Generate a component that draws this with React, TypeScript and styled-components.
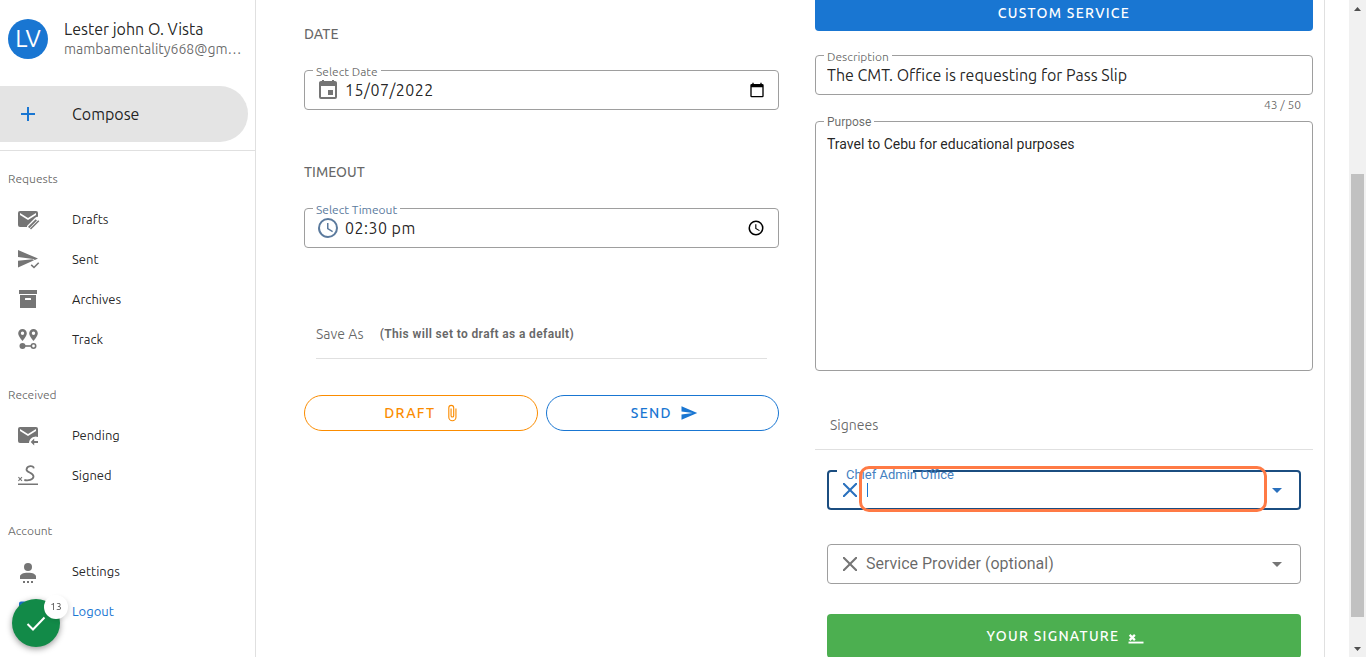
import React from "react";
import styled, { createGlobalStyle, css } from "styled-components";

const ubuntu = `Ubuntu, "Noto Sans", sans-serif`;
const roboto = `Roboto, sans-serif`;
const blue = "#1976d2";
const text = "rgba(0, 0, 0, 0.87)";
const muted = "rgba(0, 0, 0, 0.6)";
const iconGrey = "#757575";
const line = "rgba(0, 0, 0, 0.12)";

const GlobalStyle = createGlobalStyle`
  *, *::before, *::after { box-sizing: border-box; }
  body { margin: 0; background: #fff; color: ${text}; font: 14px/20px ${ubuntu}; }
  button, input, textarea { font: inherit; color: inherit; margin: 0; }
`;

/* ---------- icons ---------- */

const Svg = styled.svg<{ $size?: number }>`
  display: block;
  flex: none;
  width: ${(p) => p.$size ?? 24}px;
  height: ${(p) => p.$size ?? 24}px;
  fill: currentColor;
`;

const Icon = ({ size, children }: { size?: number; children: React.ReactNode }) => (
  <Svg $size={size} viewBox="0 0 24 24" aria-hidden="true">
    {children}
  </Svg>
);

const PlusIcon = () => (
  <Icon><path d="M19 13H13V19H11V13H5V11H11V5H13V11H19V13Z" /></Icon>
);
const DraftsIcon = () => (
  <Icon>
    <path d="M4 4H20A2 2 0 0 1 22 6V9.8C21 9.7 20 10 19.2 10.8L11 19V20H4A2 2 0 0 1 2 18V6A2 2 0 0 1 4 4ZM4 6V8L12 13L20 8V6L12 11Z" />
    <path d="M12.700 20.500L20.300 12.900" fill="none" stroke="currentColor" strokeWidth="1.800" />
    <path d="M14.500 22L22.800 13.700" fill="none" stroke="currentColor" strokeWidth="1.500" />
  </Icon>
);
const SentIcon = () => (
  <Icon>
    <path d="M2 3L22 11.6L18.8 13L17.2 12L2 10ZM2 13.8L16.5 12.2L18 13.3L15.3 14.5L2 20.5Z" />
    <path d="M15.2 17.8L18 20.5L22.7 15.8" fill="none" stroke="currentColor" strokeWidth="1.6" />
  </Icon>
);
const ArchiveIcon = () => (
  <Icon><path d="M3 3H21V7H3V3M4 8H20V21H4V8M9.5 11A.5 .5 0 0 0 9 11.5V13H15V11.5A.5 .5 0 0 0 14.5 11H9.5Z" /></Icon>
);
const TrackIcon = () => (
  <Icon>
    <path fillRule="evenodd" d="M6.5 2A4.3 4.3 0 0 1 10.8 6.3C10.8 9.2 6.5 14 6.5 14S2.2 9.2 2.2 6.3A4.3 4.3 0 0 1 6.5 2ZM6.5 4.6A1.7 1.7 0 1 0 6.5 8A1.7 1.7 0 0 0 6.5 4.6Z" />
    <path fillRule="evenodd" d="M17.5 2A4.3 4.3 0 0 1 21.8 6.3C21.8 9.2 17.5 14 17.5 14S13.2 9.2 13.2 6.3A4.3 4.3 0 0 1 17.5 2ZM17.5 4.6A1.7 1.7 0 1 0 17.5 8A1.7 1.7 0 0 0 17.5 4.6Z" />
    <circle cx="6.5" cy="19" r="3" />
    <path d="M9 18.2H15V19.8H9Z" />
    <circle cx="17.5" cy="19" r="2.2" fill="none" stroke="currentColor" strokeWidth="1.6" />
  </Icon>
);
const PendingIcon = () => (
  <Icon>
    <path d="M4 4H20A2 2 0 0 1 22 6V14.1A6.5 6.5 0 0 0 13 20H4A2 2 0 0 1 2 18V6A2 2 0 0 1 4 4ZM4 6V8L12 13L20 8V6L12 11Z" />
    <path d="M18.2 15.5V18H22V20H18.2V22.5L14.7 19Z" />
  </Icon>
);
const SignedIcon = () => (
  <Icon>
    <path d="M2 20.5H22V22H2Z" />
    <path d="M2.4 14.2L6 17.8M6 14.2L2.4 17.8" fill="none" stroke="currentColor" strokeWidth="1.1" />
    <path d="M17.8 5.3C17.5 2 11 2.5 10.5 6.5C10.3 9.5 17.6 9.6 17.5 13.5C17.3 17 12 17.8 8.3 17" fill="none" stroke="currentColor" strokeWidth="1.8" />
  </Icon>
);
const SettingsIcon = () => (
  <Icon>
    <circle cx="12" cy="8" r="4" />
    <path d="M12 13.800C17 13.800 20 15.400 20 17.600V20H4V17.600C4 15.400 7 13.800 12 13.800ZM7 22H9V24H7ZM11 22H13V24H11ZM15 22H17V24H15Z" />
  </Icon>
);
const LogoutIcon = () => (
  <Icon>
    <path d="M19 2.5H5A2 2 0 0 0 3 4.500V9H5V5H19V19H5V15H3V19A2 2 0 0 0 5 21H19A2 2 0 0 0 21 19V4.500A2 2 0 0 0 19 2.500M10 15.600L11.500 17L16.500 12L11.500 7L10 8.400L12.600 11H3V13H12.600Z" />
  </Icon>
);
const CalendarIcon = () => (
  <Icon><path d="M19 19H5V8H19M16 1V3H8V1H6V3H5C3.890 3 3 3.890 3 5V19A2 2 0 0 0 5 21H19A2 2 0 0 0 21 19V5C21 3.890 20.100 3 19 3H18V1M17 12H12V17H17V12Z" /></Icon>
);
const ClockIcon = ({ size }: { size?: number }) => (
  <Icon size={size}>
    <path d="M12 20A8 8 0 0 0 20 12A8 8 0 0 0 12 4A8 8 0 0 0 4 12A8 8 0 0 0 12 20M12 2A10 10 0 0 1 22 12A10 10 0 0 1 12 22C6.470 22 2 17.500 2 12A10 10 0 0 1 12 2M12.500 7V12.250L17 14.920L16.250 16.150L11 13V7H12.500Z" />
  </Icon>
);
const PickDateIcon = () => (
  <Icon size={16}>
    <path d="M20 3H19V1H17V3H7V1H5V3H4A2 2 0 0 0 2 5V21A2 2 0 0 0 4 23H20A2 2 0 0 0 22 21V5A2 2 0 0 0 20 3ZM20 21H4V8H20Z" />
  </Icon>
);
const ClipIcon = () => (
  <Icon size={18}>
    <path d="M16.500 6V17.500A4 4 0 0 1 12.500 21.500A4 4 0 0 1 8.500 17.500V5A2.500 2.500 0 0 1 11 2.500A2.500 2.500 0 0 1 13.500 5V15.500A1 1 0 0 1 12.500 16.500A1 1 0 0 1 11.500 15.500V6H10V15.500A2.500 2.500 0 0 0 12.500 18A2.500 2.500 0 0 0 15 15.500V5A4 4 0 0 0 11 1A4 4 0 0 0 7 5V17.500A5.500 5.500 0 0 0 12.500 23A5.500 5.500 0 0 0 18 17.500V6H16.500Z" />
  </Icon>
);
const SendIcon = () => (
  <Icon size={18}><path d="M2 21L23 12L2 3V10L17 12L2 14V21Z" /></Icon>
);
const CloseIcon = () => (
  <Icon><path d="M13.460 12L19 17.540V19H17.540L12 13.460L6.460 19H5V17.540L10.540 12L5 6.460V5H6.460L12 10.540L17.540 5H19V6.460L13.460 12Z" /></Icon>
);
const MenuDownIcon = () => (
  <Icon><path d="M7 10L12 15L17 10H7Z" /></Icon>
);
const SignHereIcon = () => (
  <Icon size={18}>
    <path d="M2 19.500H22V22H2Z" />
    <path d="M3.500 10.500L10.500 17.500M10.500 10.500L3.500 17.500" fill="none" stroke="currentColor" strokeWidth="3" />
  </Icon>
);
const CheckIcon = () => (
  <Icon><path d="M3.500 13L9 18.500L20.500 6.500" fill="none" stroke="currentColor" strokeWidth="2" /></Icon>
);

/* ---------- shell ---------- */

const Shell = styled.div`
  display: flex;
  height: 100vh;
  overflow: hidden;
`;

const Sidebar = styled.aside`
  flex: none;
  width: 256px;
  border-right: 1px solid ${line};
`;

const Profile = styled.div`
  display: flex;
  align-items: center;
  gap: 16px;
  height: 86px;
  padding: 0 8px 8px;
`;

const Avatar = styled.div`
  display: grid;
  place-items: center;
  flex: none;
  width: 40px;
  height: 40px;
  border-radius: 50%;
  background: ${blue};
  color: #fff;
  font-size: 24px;
`;

const ProfileText = styled.div`
  min-width: 0;
`;

const Name = styled.div`
  font-size: 16px;
`;

const Email = styled.div`
  overflow: hidden;
  white-space: nowrap;
  text-overflow: ellipsis;
  color: ${muted};
  font-size: 14px;
`;

const Compose = styled.button`
  display: flex;
  align-items: center;
  gap: 32px;
  width: calc(100% - 7px);
  height: 56px;
  padding: 0 16px;
  border: 0;
  border-radius: 0 28px 28px 0;
  background: #e4e4e4;
  font-size: 16px;

  svg { color: ${blue}; }
`;

const Nav = styled.nav`
  margin-top: 8px;
  border-top: 1px solid ${line};
`;

const NavGroup = styled.section`
  padding: 8px 0;
`;

const NavTitle = styled.h2`
  margin: 0;
  padding: 0 8px;
  font-size: 12px;
  font-weight: 400;
  line-height: 40px;
  color: ${muted};
`;

const NavLink = styled.a<{ $accent?: boolean }>`
  display: flex;
  align-items: center;
  gap: 32px;
  height: 40px;
  padding: 0 16px;
  font-size: 13px;
  text-decoration: none;
  color: ${(p) => (p.$accent ? blue : text)};

  svg { color: ${(p) => (p.$accent ? blue : iconGrey)}; }
`;

const Main = styled.main`
  flex: 1;
  display: grid;
  grid-template-columns: 475fr 498fr;
  column-gap: 36px;
  min-width: 0;
  margin-right: 24px;
  padding: 0 11px 0 48px;
  border-right: 1px solid ${line};
  overflow: hidden;
`;

/* ---------- form ---------- */

const Column = styled.div`
  min-width: 0;
`;

const Group = styled.section`
  height: 138px;
  padding-top: 24px;
`;

const GroupTitle = styled.h2`
  margin: 0 0 26px;
  font-size: 14px;
  font-weight: 500;
  line-height: 20px;
  color: ${muted};
`;

const Field = styled.div<{ $focused?: boolean }>`
  position: relative;
  display: flex;
  align-items: center;
  height: 40px;
  padding: 0 11px;
  border: 1px solid #9e9e9e;
  border-radius: 4px;
  color: ${iconGrey};

  ${(p) =>
    p.$focused &&
    css`
      border: 2px solid #1b4d80;
      color: #2a70bd;
    `}
`;

const SelectField = styled(Field)`
  padding: 0 ${(p) => (p.$focused ? 10 : 11)}px 0 ${(p) => (p.$focused ? 9 : 10)}px;
`;

const FloatLabel = styled.label<{ $tone?: string; $font?: string }>`
  position: absolute;
  top: -7px;
  left: 8px;
  padding: 0 3px;
  background: #fff;
  font-family: ${(p) => p.$font ?? ubuntu};
  font-size: 12px;
  line-height: 16px;
  color: ${(p) => p.$tone ?? muted};
`;

const AreaLabel = styled(FloatLabel)`
  top: -8px;
`;

const Input = styled.input<{ $font?: string }>`
  flex: 1;
  min-width: 0;
  padding: 0;
  border: 0;
  outline: 0;
  background: transparent;
  font-family: ${(p) => p.$font ?? ubuntu};
  font-size: 16px;
  line-height: 24px;
  color: ${text};

  &::placeholder { color: ${muted}; opacity: 1; }
`;

const SpacedInput = styled(Input)`
  padding-left: 5px;
  letter-spacing: 0.03em;
`;

const ProviderInput = styled(Input)`
  padding-left: 4px;
`;

const TimeoutTone = styled.span`
  color: #5b7a9d;
`;

const IconButton = styled.button<{ $dark?: boolean }>`
  display: block;
  padding: 0;
  border: 0;
  background: transparent;
  color: ${(p) => (p.$dark ? "#000" : "inherit")};
`;

const PickerButton = styled(IconButton)`
  margin-right: 2px;
`;

const SaveRow = styled.div`
  display: flex;
  align-items: center;
  gap: 16px;
  margin: 34px 12px 36px;
  padding: 14px 0;
  border-bottom: 1px solid ${line};
  color: ${muted};
  font-size: 14px;
`;

const Hint = styled.strong`
  font: 700 12px/20px ${roboto};
  letter-spacing: 0.03em;
`;

const Actions = styled.div`
  display: grid;
  grid-template-columns: 1fr 1fr;
  gap: 8px;
`;

const ActionButton = styled.button`
  display: flex;
  align-items: center;
  justify-content: center;
  gap: 8px;
  font-size: 14px;
  font-weight: 500;
  letter-spacing: 0.09em;

  svg { margin-right: -4px; }
`;

const PillButton = styled(ActionButton)<{ $tone: string }>`
  height: 36px;
  border: 1px solid currentColor;
  border-radius: 18px;
  background: #fff;
  color: ${(p) => p.$tone};
`;

const SolidButton = styled(ActionButton)<{ $tone: string; $cut?: boolean }>`
  width: 100%;
  height: 44px;
  border: 0;
  border-radius: 4px;
  background: ${(p) => p.$tone};
  color: #fff;

  ${(p) =>
    p.$cut &&
    css`
      height: 31px;
      margin-bottom: 24px;
      padding-bottom: 6px;
      border-radius: 0 0 4px 4px;
    `}
`;

const Counter = styled.div`
  padding: 0 12px;
  margin-bottom: 6px;
  text-align: right;
  font-size: 12px;
  line-height: 20px;
  color: ${muted};
`;

const AreaField = styled.div`
  position: relative;
  height: 250px;
  border: 1px solid #9e9e9e;
  border-radius: 4px;
`;

const Area = styled.textarea`
  display: block;
  width: 100%;
  height: 100%;
  padding: 12px 11px;
  border: 0;
  outline: 0;
  resize: none;
  background: transparent;
  font: 14px/20px ${roboto};
  color: ${text};
`;

const SigneesTitle = styled.h2`
  margin: 35px 0 20px;
  padding: 9px 15px 14px;
  border-bottom: 1px solid ${line};
  font-size: 14px;
  font-weight: 400;
  line-height: 20px;
  color: ${muted};
`;

const Signees = styled.div`
  display: grid;
  gap: 34px;
  padding: 0 12px;
  margin-bottom: 30px;
`;

const SignatureRow = styled.div`
  padding: 0 12px;
`;

const Notch = styled.span`
  position: absolute;
  top: -2px;
  left: 8px;
  width: 76px;
  height: 2px;
  background: #fff;
`;

const OfficeLabel = styled.label`
  position: absolute;
  top: -5px;
  left: 17px;
  font: 13px/16px ${roboto};
  color: #4480bf;
`;

const Highlight = styled.span`
  position: absolute;
  top: -6px;
  right: 32px;
  bottom: -4px;
  left: 30px;
  border: 3px solid #ff7a45;
  border-radius: 10px;
  pointer-events: none;
`;

const Caret = styled.span`
  width: 1px;
  height: 14px;
  margin-left: 5px;
  background: ${blue};
`;

/* ---------- scroll bar ---------- */

const ScrollBar = styled.div`
  display: flex;
  flex-direction: column;
  align-items: center;
  flex: none;
  width: 17px;
  background: #f1f1f1;
  color: #505050;
`;

const Track = styled.div<{ $grow: number; $thumb?: boolean }>`
  flex: ${(p) => p.$grow} 0 0;
  width: 13px;
  background: ${(p) => (p.$thumb ? "#c1c1c1" : "transparent")};
`;

const Arrow = ({ up }: { up?: boolean }) => (
  <Svg $size={17} viewBox="0 0 17 17" aria-hidden="true">
    <path d={up ? "M5 11L8.500 7L12 11Z" : "M5 7L8.500 11L12 7Z"} />
  </Svg>
);

/* ---------- status bubble ---------- */

const Bubble = styled.button`
  position: fixed;
  left: 12px;
  bottom: 10px;
  display: grid;
  place-items: center;
  width: 48px;
  height: 48px;
  padding: 0;
  border: 0;
  border-radius: 50%;
  background: #128a48;
  color: #fff;
  box-shadow: 0 2px 6px rgba(0, 0, 0, 0.4);
`;

const Badge = styled.span`
  position: absolute;
  top: -4px;
  right: -8px;
  width: 24px;
  height: 24px;
  border-radius: 50%;
  background: #fff;
  color: #424242;
  font-size: 10px;
  line-height: 24px;
  text-align: center;
  box-shadow: 2px 2px 4px rgba(0, 0, 0, 0.1);
`;

const groups = [
  {
    title: "Requests",
    items: [
      { label: "Drafts", icon: <DraftsIcon /> },
      { label: "Sent", icon: <SentIcon /> },
      { label: "Archives", icon: <ArchiveIcon /> },
      { label: "Track", icon: <TrackIcon /> },
    ],
  },
  {
    title: "Received",
    items: [
      { label: "Pending", icon: <PendingIcon /> },
      { label: "Signed", icon: <SignedIcon /> },
    ],
  },
  {
    title: "Account",
    items: [
      { label: "Settings", icon: <SettingsIcon /> },
      { label: "Logout", icon: <LogoutIcon />, accent: true },
    ],
  },
];

export default function App() {
  return (
    <>
      <GlobalStyle />
      <Shell>
        <Sidebar>
          <Profile>
            <Avatar>LV</Avatar>
            <ProfileText>
              <Name>Lester john O. Vista</Name>
              <Email>mambamentality668@gmail.com</Email>
            </ProfileText>
          </Profile>
          <Compose type="button">
            <PlusIcon />
            Compose
          </Compose>
          <Nav>
            {groups.map((group) => (
              <NavGroup key={group.title}>
                <NavTitle>{group.title}</NavTitle>
                {group.items.map((item) => (
                  <NavLink key={item.label} href="#" $accent={"accent" in item}>
                    {item.icon}
                    {item.label}
                  </NavLink>
                ))}
              </NavGroup>
            ))}
          </Nav>
        </Sidebar>

        <Main>
          <Column>
            <Group>
              <GroupTitle>DATE</GroupTitle>
              <Field>
                <FloatLabel htmlFor="date">Select Date</FloatLabel>
                <CalendarIcon />
                <SpacedInput id="date" defaultValue="15/07/2022" />
                <PickerButton type="button" $dark aria-label="Open calendar">
                  <PickDateIcon />
                </PickerButton>
              </Field>
            </Group>
            <Group>
              <GroupTitle>TIMEOUT</GroupTitle>
              <Field>
                <FloatLabel htmlFor="timeout" $tone="#5b7a9d">Select Timeout</FloatLabel>
                <TimeoutTone><ClockIcon /></TimeoutTone>
                <SpacedInput id="timeout" defaultValue="02:30 pm" />
                <PickerButton type="button" $dark aria-label="Open time picker">
                  <ClockIcon size={18} />
                </PickerButton>
              </Field>
            </Group>
            <SaveRow>
              <span>Save As</span>
              <Hint>(This will set to draft as a default)</Hint>
            </SaveRow>
            <Actions>
              <PillButton type="button" $tone="#fb8c00">
                DRAFT <ClipIcon />
              </PillButton>
              <PillButton type="button" $tone={blue}>
                SEND <SendIcon />
              </PillButton>
            </Actions>
          </Column>

          <Column>
            <SolidButton type="button" $tone={blue} $cut>CUSTOM SERVICE</SolidButton>
            <Field>
              <FloatLabel htmlFor="description">Description</FloatLabel>
              <Input id="description" defaultValue="The CMT. Office is requesting for Pass Slip" />
            </Field>
            <Counter>43 / 50</Counter>
            <AreaField>
              <AreaLabel htmlFor="purpose" $font={roboto}>Purpose</AreaLabel>
              <Area id="purpose" defaultValue="Travel to Cebu for educational purposes" />
            </AreaField>
            <SigneesTitle>Signees</SigneesTitle>
            <Signees>
              <SelectField $focused>
                <Notch />
                <OfficeLabel htmlFor="office">Chief Admin Office</OfficeLabel>
                <IconButton type="button" aria-label="Clear office"><CloseIcon /></IconButton>
                <Caret />
                <Input id="office" $font={roboto} />
                <IconButton type="button" aria-label="Show offices"><MenuDownIcon /></IconButton>
                <Highlight />
              </SelectField>
              <SelectField>
                <IconButton type="button" aria-label="Clear provider"><CloseIcon /></IconButton>
                <ProviderInput
                  $font={roboto}
                  aria-label="Service Provider (optional)"
                  placeholder="Service Provider (optional)"
                />
                <IconButton type="button" aria-label="Show providers"><MenuDownIcon /></IconButton>
              </SelectField>
            </Signees>
            <SignatureRow>
              <SolidButton type="button" $tone="#4caf50">
                YOUR SIGNATURE <SignHereIcon />
              </SolidButton>
            </SignatureRow>
          </Column>
        </Main>

        <ScrollBar aria-hidden="true">
          <Arrow up />
          <Track $grow={157} />
          <Track $grow={443} $thumb />
          <Track $grow={23} />
          <Arrow />
        </ScrollBar>
      </Shell>
      <Bubble type="button" aria-label="13 checks passed">
        <CheckIcon />
        <Badge>13</Badge>
      </Bubble>
    </>
  );
}
